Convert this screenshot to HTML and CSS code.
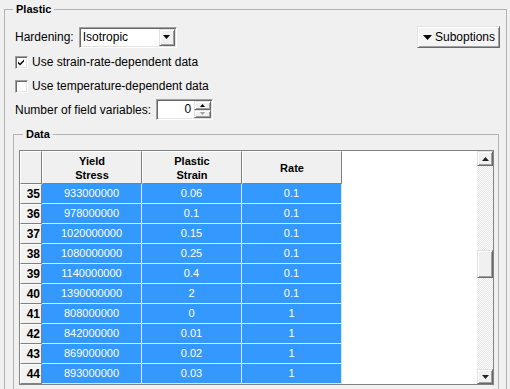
FILE: index.html
```html
<!DOCTYPE html>
<html lang="en">
<head>
    <meta charset="UTF-8">
    <meta name="viewport" content="width=device-width, initial-scale=1.0">
    <title>Edit Material - Plastic</title>
    <link rel="stylesheet" href="styles.css">
</head>
<body>
    <fieldset class="group plastic">
        <legend>Plastic</legend>

        <div class="top-row">
            <div class="field">
                <span>Hardening:</span>
                <div class="combo">
                    <span class="combo-text">Isotropic</span>
                    <span class="combo-btn">
                        <svg width="7" height="4" viewBox="0 0 7 4"><path d="M0 0h7L3.5 4z"/></svg>
                    </span>
                </div>
            </div>
            <button class="btn suboptions" type="button">
                <svg width="9" height="5" viewBox="0 0 9 5"><path d="M0 0h9L4.5 5z"/></svg>
                <span>Suboptions</span>
            </button>
        </div>

        <label class="check-row">
            <span class="checkbox">
                <svg width="9" height="9" viewBox="0 0 9 9"><path d="M1 3.5l2 2 4-4v2l-4 4-2-2z"/></svg>
            </span>
            <span>Use strain-rate-dependent data</span>
        </label>
        <label class="check-row">
            <span class="checkbox"></span>
            <span>Use temperature-dependent data</span>
        </label>

        <div class="spin-row">
            <span>Number of field variables:</span>
            <div class="spinner">
                <span class="spin-value">0</span>
                <span class="spin-btns">
                    <span class="spin-btn"><svg width="5" height="3" viewBox="0 0 5 3"><path d="M0 3h5L2.5 0z"/></svg></span>
                    <span class="spin-btn disabled"><svg width="5" height="3" viewBox="0 0 5 3"><path d="M0 0h5L2.5 3z"/></svg></span>
                </span>
            </div>
        </div>

        <fieldset class="group data">
            <legend>Data</legend>
            <div class="grid-widget">
                <div class="grid-view">
                    <table class="grid">
                        <colgroup>
                            <col class="col-num">
                            <col class="col-val">
                            <col class="col-val">
                            <col class="col-val">
                        </colgroup>
                        <thead>
                            <tr>
                                <th></th>
                                <th>Yield<br>Stress</th>
                                <th>Plastic<br>Strain</th>
                                <th>Rate</th>
                            </tr>
                        </thead>
                        <tbody>
                            <tr><th class="row-num">35</th><td>933000000</td><td>0.06</td><td>0.1</td></tr>
                            <tr><th class="row-num">36</th><td>978000000</td><td>0.1</td><td>0.1</td></tr>
                            <tr><th class="row-num">37</th><td>1020000000</td><td>0.15</td><td>0.1</td></tr>
                            <tr><th class="row-num">38</th><td>1080000000</td><td>0.25</td><td>0.1</td></tr>
                            <tr><th class="row-num">39</th><td>1140000000</td><td>0.4</td><td>0.1</td></tr>
                            <tr><th class="row-num">40</th><td>1390000000</td><td>2</td><td>0.1</td></tr>
                            <tr><th class="row-num">41</th><td>808000000</td><td>0</td><td>1</td></tr>
                            <tr><th class="row-num">42</th><td>842000000</td><td>0.01</td><td>1</td></tr>
                            <tr><th class="row-num">43</th><td>869000000</td><td>0.02</td><td>1</td></tr>
                            <tr><th class="row-num">44</th><td>893000000</td><td>0.03</td><td>1</td></tr>
                        </tbody>
                    </table>
                </div>
                <div class="vscroll">
                    <span class="scroll-btn"><svg width="7" height="4" viewBox="0 0 7 4"><path d="M0 4h7L3.5 0z"/></svg></span>
                    <div class="scroll-track"><div class="scroll-thumb"></div></div>
                    <span class="scroll-btn"><svg width="7" height="4" viewBox="0 0 7 4"><path d="M0 0h7L3.5 4z"/></svg></span>
                </div>
            </div>
        </fieldset>
    </fieldset>
</body>
</html>
```

FILE: styles.css
```css
:root {
    --face: #f0f0f0;
    --light: #ffffff;
    --shadow: #a0a0a0;
    --dark-shadow: #696969;
    --frame: #b4b4b4;
    --selected: #3399ff;
    --selected-line: #d6eaff;
}

* {
    box-sizing: border-box;
    margin: 0;
    padding: 0;
}

html {
    overflow: hidden;
}

body {
    font-family: "Liberation Sans", Arial, sans-serif;
    font-size: 12px;
    color: #000;
    background-color: var(--face);
    height: 389px;
    overflow: hidden;
}

/* Group boxes */
.group {
    border: 1px solid var(--frame);
    min-width: 0;
}

.group legend {
    font-size: 11px;
    font-weight: bold;
    line-height: 18px;
    padding: 0 3px;
}

.plastic {
    margin: 0 3px 0 4px;
    padding: 8px 6px 10px 10px;
}

.plastic > legend {
    margin-left: -2px;
}

.data {
    margin: 5px 1px 0 -2px;
    padding: 7px 4px 12px 5px;
}

.data > legend {
    margin-left: 4px;
}

/* Sunken / raised edges */
.combo,
.spinner,
.checkbox {
    background-color: #fff;
    border: 1px solid;
    border-color: var(--shadow) var(--light) var(--light) var(--shadow);
    box-shadow: inset 1px 1px var(--dark-shadow), inset -1px -1px #e3e3e3;
}

.combo-btn,
.spin-btn,
.scroll-btn,
.scroll-thumb,
.btn {
    background-color: var(--face);
    border: 1px solid;
    border-color: #e3e3e3 var(--dark-shadow) var(--dark-shadow) #e3e3e3;
    box-shadow: inset 1px 1px var(--light), inset -1px -1px var(--shadow);
}

/* Top row */
.top-row {
    display: flex;
    justify-content: space-between;
    align-items: center;
    height: 22px;
}

.field {
    display: flex;
    align-items: center;
    gap: 5px;
}

.combo {
    width: 98px;
    height: 21px;
    display: flex;
    align-items: center;
    padding: 1px;
}

.combo-text {
    flex: 1;
    padding-left: 2px;
    line-height: 17px;
}

.combo-btn {
    width: 16px;
    height: 17px;
    display: flex;
    align-items: center;
    justify-content: center;
}

.btn {
    font: inherit;
    color: #000;
    height: 22px;
    width: 83px;
    display: flex;
    align-items: center;
    gap: 3px;
    padding-left: 5px;
    background-color: #f4f4f4;
}

/* Check boxes */
.check-row {
    display: flex;
    align-items: center;
    gap: 4px;
    height: 20px;
    margin-top: 4px;
}

.checkbox {
    width: 13px;
    height: 13px;
    display: flex;
    align-items: center;
    justify-content: center;
}

/* Spinner */
.spin-row {
    display: flex;
    align-items: center;
    gap: 5px;
    height: 21px;
    margin-top: 3px;
}

.spinner {
    width: 57px;
    height: 21px;
    display: flex;
    padding: 1px;
}

.spin-value {
    flex: 1;
    text-align: right;
    padding-right: 3px;
    line-height: 17px;
}

.spin-btns {
    width: 17px;
    display: flex;
    flex-direction: column;
}

.spin-btn {
    flex: 1;
    display: flex;
    align-items: center;
    justify-content: center;
}

.spin-btn.disabled svg {
    fill: #a0a0a0;
}

/* Data table */
.grid-widget {
    display: flex;
    width: 475px;
    height: 235px;
    border: 1px solid #828282;
}

.grid-view {
    flex: 1;
    background-color: #fff;
    overflow: hidden;
}

.grid {
    border-collapse: separate;
    border-spacing: 0;
    table-layout: fixed;
    width: 322px;
    font-size: 11px;
}

.col-num {
    width: 22px;
}

.col-val {
    width: 100px;
}

.grid thead tr {
    height: 33px;
}

.grid tbody tr {
    height: 20px;
}

.grid th {
    background-color: var(--face);
    font-weight: bold;
    line-height: 14px;
    vertical-align: middle;
    text-align: center;
    border: 1px solid;
    border-color: var(--light) #808080 #808080 var(--light);
}

.grid th.row-num {
    font-size: 12px;
    line-height: 18px;
    text-align: right;
    padding-right: 1px;
    background-color: #f3f3f3;
}

.grid td {
    background-color: var(--selected);
    color: #fff;
    text-align: center;
    line-height: 19px;
    border-right: 1px solid var(--selected-line);
    border-bottom: 1px solid var(--selected-line);
}

/* Scroll bar */
.vscroll {
    width: 16px;
    display: flex;
    flex-direction: column;
    background: repeating-conic-gradient(#e6e6e6 0 25%, #fcfcfc 0 50%) 0 0 / 2px 2px;
}

.scroll-btn {
    height: 15px;
    display: flex;
    align-items: center;
    justify-content: center;
}

.scroll-btn svg {
    fill: #222;
}

.scroll-track {
    flex: 1;
}

.scroll-thumb {
    height: 28px;
    margin-top: 84px;
}
```
